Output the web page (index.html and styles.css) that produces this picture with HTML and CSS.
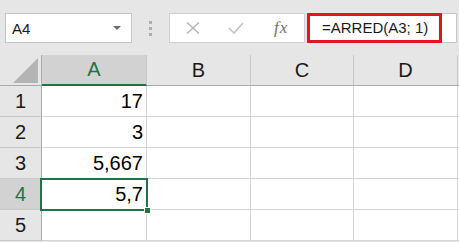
FILE: index.html
```html
<!DOCTYPE html>
<html lang="pt">
<head>
    <meta charset="UTF-8">
    <meta name="viewport" content="width=device-width, initial-scale=1.0">
    <title>Planilha</title>
    <link rel="stylesheet" href="styles.css">
</head>
<body>
    <div class="toolbar">
        <div class="namebox">
            <span>A4</span>
            <span class="arrow"></span>
        </div>
        <div class="grip">
            <span></span><span></span><span></span>
        </div>
        <div class="fxbox">
            <svg class="icon-x" width="18" height="12" viewBox="0 0 18 12">
                <path d="M3 0.5 L15 11.5 M15 0.5 L3 11.5" stroke="#b8b8b8" stroke-width="1.6" fill="none"/>
            </svg>
            <svg class="icon-check" width="16" height="12" viewBox="0 0 16 12">
                <path d="M1 6 L6 11 L15 1" stroke="#c4c4c4" stroke-width="1.6" fill="none"/>
            </svg>
            <span class="fx">fx</span>
        </div>
        <div class="formula">
            <div class="highlight">=ARRED(A3; 1)</div>
            <div class="rest"></div>
        </div>
    </div>

    <div class="sheet">
        <div class="corner">
            <svg width="25" height="25" viewBox="0 0 25 25">
                <polygon points="0,25 25,25 25,0" fill="#b4b4b4"/>
            </svg>
        </div>
        <div class="colhead active">A</div>
        <div class="colhead">B</div>
        <div class="colhead">C</div>
        <div class="colhead">D</div>
        <div class="colhead last"></div>

        <div class="rowhead">1</div>
        <div class="cell num">17</div>
        <div class="cell"></div><div class="cell"></div><div class="cell"></div><div class="cell last"></div>

        <div class="rowhead">2</div>
        <div class="cell num">3</div>
        <div class="cell"></div><div class="cell"></div><div class="cell"></div><div class="cell last"></div>

        <div class="rowhead">3</div>
        <div class="cell num">5,667</div>
        <div class="cell"></div><div class="cell"></div><div class="cell"></div><div class="cell last"></div>

        <div class="rowhead active">4</div>
        <div class="cell num selected">5,7</div>
        <div class="cell"></div><div class="cell"></div><div class="cell"></div><div class="cell last"></div>

        <div class="rowhead">5</div>
        <div class="cell"></div>
        <div class="cell"></div><div class="cell"></div><div class="cell"></div><div class="cell last"></div>
    </div>
</body>
</html>
```

FILE: styles.css
```css
body {
    margin: 0;
    background: #e6e6e6;
    font-family: "Liberation Sans", Arial, sans-serif;
    color: #1a1a1a;
    overflow: hidden;
}
.toolbar {
    display: flex;
    align-items: center;
    height: 55px;
    padding: 13px 0 12px 5px;
    box-sizing: border-box;
}
.namebox {
    width: 127px;
    height: 30px;
    box-sizing: border-box;
    background: #fff;
    border: 1px solid #c6c6c6;
    display: flex;
    align-items: center;
    justify-content: space-between;
    padding: 0 10px 0 6px;
    font-size: 15px;
}
.arrow {
    width: 0;
    height: 0;
    border-left: 4px solid transparent;
    border-right: 4px solid transparent;
    border-top: 4px solid #6a6a6a;
}
.grip {
    width: 37px;
    display: flex;
    flex-direction: column;
    align-items: center;
    gap: 3px;
}
.grip span {
    width: 3px;
    height: 3px;
    background: #adadad;
}
.fxbox {
    width: 136px;
    height: 30px;
    box-sizing: border-box;
    background: #fff;
    border: 1px solid #d0d0d0;
    display: flex;
    align-items: center;
    padding-left: 14px;
}
.icon-x {
    margin-right: 26px;
}
.icon-check {
    margin-right: 30px;
}
.fx {
    font-family: "Liberation Serif", "Times New Roman", serif;
    font-style: italic;
    font-size: 17px;
    color: #6f6f6f;
    letter-spacing: 1px;
}
.formula {
    display: flex;
    margin-left: 2px;
    height: 30px;
}
.highlight {
    width: 135px;
    height: 30px;
    box-sizing: border-box;
    border: 3px solid #e2141c;
    background: #fff;
    padding-left: 12px;
    font-size: 15px;
    line-height: 24px;
}
.rest {
    width: 14px;
    background: #fff;
    border: 1px solid #c6c6c6;
    border-left: none;
}
.sheet {
    display: grid;
    grid-template-columns: 42px 105px 104px 103px 104px 1fr;
    grid-auto-rows: 31px;
    font-size: 20px;
}
.corner {
    background: #e6e6e6;
    border-right: 1px solid #ababab;
    border-bottom: 1px solid #ababab;
    display: flex;
    align-items: flex-end;
    justify-content: flex-end;
    padding: 0 3px 2px 0;
}
.colhead {
    background: #e6e6e6;
    border-right: 1px solid #c8c8c8;
    border-bottom: 1px solid #ababab;
    display: flex;
    align-items: center;
    justify-content: center;
}
.colhead.active {
    background: #d2d2d2;
    color: #217346;
    border-bottom: 2px solid #217346;
}
.rowhead {
    background: #e6e6e6;
    border-right: 1px solid #ababab;
    border-bottom: 1px solid #c8c8c8;
    display: flex;
    align-items: center;
    justify-content: center;
}
.rowhead.active {
    background: #d2d2d2;
    color: #217346;
}
.cell {
    background: #fff;
    border-right: 1px solid #d4d4d4;
    border-bottom: 1px solid #d4d4d4;
    display: flex;
    align-items: center;
    color: #000;
}
.cell.last, .colhead.last {
    border-right: none;
}
.num {
    justify-content: flex-end;
    padding-right: 3px;
}
.selected {
    position: relative;
}
.selected::before {
    content: "";
    position: absolute;
    left: -2px;
    top: -1px;
    right: -2px;
    bottom: -2px;
    border: 2px solid #217346;
}
.selected::after {
    content: "";
    position: absolute;
    right: -5px;
    bottom: -5px;
    width: 5px;
    height: 5px;
    background: #217346;
    border: 1px solid #fff;
}
```
